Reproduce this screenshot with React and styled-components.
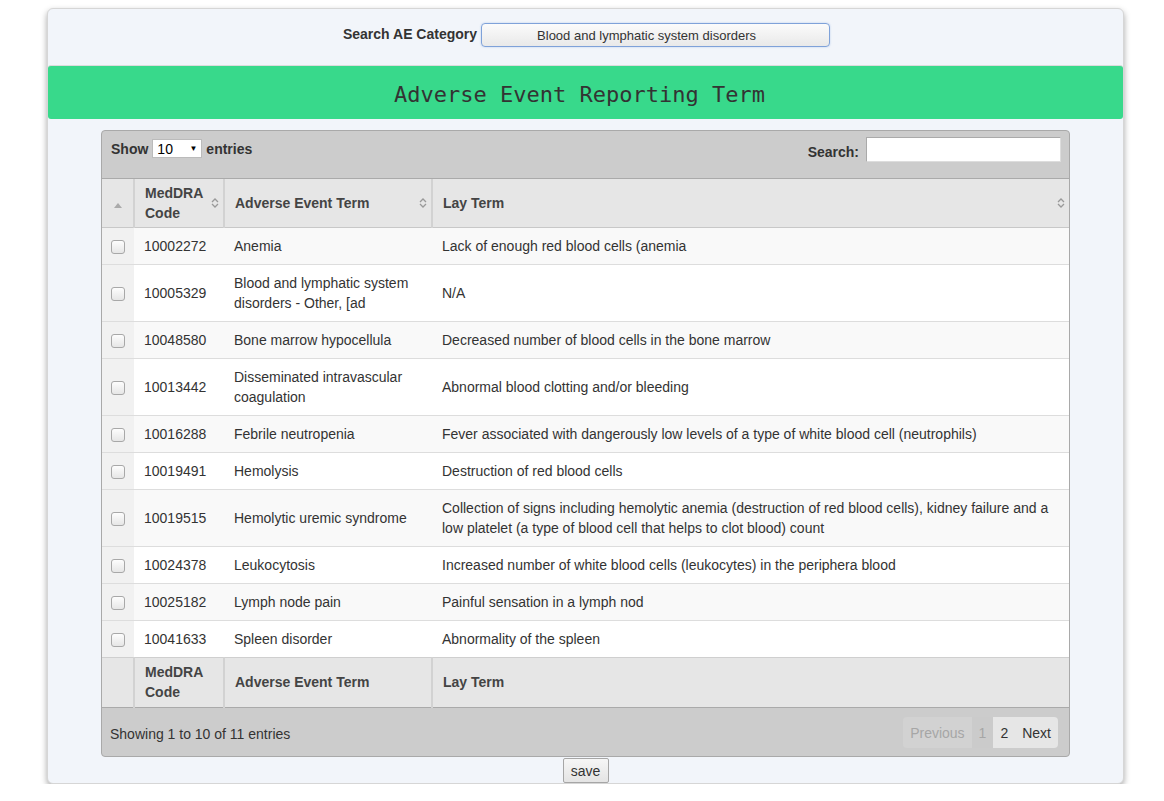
import React from 'react';
import styled, { createGlobalStyle } from 'styled-components';

const rows = [
  { code: '10002272', term: 'Anemia', lay: 'Lack of enough red blood cells (anemia' },
  { code: '10005329', term: 'Blood and lymphatic system disorders - Other, [ad', lay: 'N/A' },
  { code: '10048580', term: 'Bone marrow hypocellula', lay: 'Decreased number of blood cells in the bone marrow' },
  { code: '10013442', term: 'Disseminated intravascular coagulation', lay: 'Abnormal blood clotting and/or bleeding' },
  { code: '10016288', term: 'Febrile neutropenia', lay: 'Fever associated with dangerously low levels of a type of white blood cell (neutrophils)' },
  { code: '10019491', term: 'Hemolysis', lay: 'Destruction of red blood cells' },
  { code: '10019515', term: 'Hemolytic uremic syndrome', lay: 'Collection of signs including hemolytic anemia (destruction of red blood cells), kidney failure and a low platelet (a type of blood cell that helps to clot blood) count' },
  { code: '10024378', term: 'Leukocytosis', lay: 'Increased number of white blood cells (leukocytes) in the periphera blood' },
  { code: '10025182', term: 'Lymph node pain', lay: 'Painful sensation in a lymph nod' },
  { code: '10041633', term: 'Spleen disorder', lay: 'Abnormality of the spleen' },
];

function SortBoth() {
  return (
    <SortIcon width="8" height="12" viewBox="0 0 8 12">
      <path d="M1 5 L4 2 L7 5" fill="none" stroke="#999" strokeWidth="1.3" />
      <path d="M1 7 L4 10 L7 7" fill="none" stroke="#999" strokeWidth="1.3" />
    </SortIcon>
  );
}

function App() {
  return (
    <>
      <GlobalStyle />
      <Card>
        <CategoryRow>
          <CategoryLabel>Search AE Category</CategoryLabel>
          <CategoryButton>Blood and lymphatic system disorders</CategoryButton>
        </CategoryRow>
        <Banner>Adverse Event Reporting Term</Banner>
        <TableBox>
          <TopBar>
            <Length>
              Show
              <FakeSelect>
                10<span>▼</span>
              </FakeSelect>
              entries
            </Length>
            <SearchLabel>
              Search:
              <SearchInput />
            </SearchLabel>
          </TopBar>
          <Table>
            <colgroup>
              <col style={{ width: 32 }} />
              <col style={{ width: 90 }} />
              <col style={{ width: 208 }} />
              <col />
            </colgroup>
            <thead>
              <tr>
                <Th $center>
                  <svg width="8" height="5" viewBox="0 0 8 5">
                    <path d="M0 5 L4 0 L8 5 Z" fill="#aaa" />
                  </svg>
                </Th>
                <Th>
                  <HeadInner>
                    <span>MedDRA<br />Code</span>
                    <SortBoth />
                  </HeadInner>
                </Th>
                <Th>
                  <HeadInner>
                    <span>Adverse Event Term</span>
                    <SortBoth />
                  </HeadInner>
                </Th>
                <Th>
                  <HeadInner>
                    <span>Lay Term</span>
                    <SortBoth />
                  </HeadInner>
                </Th>
              </tr>
            </thead>
            <tbody>
              {rows.map((r, i) => (
                <Row key={r.code} $odd={i % 2 === 0}>
                  <CheckCell>
                    <Check />
                  </CheckCell>
                  <Td>{r.code}</Td>
                  <Td>{r.term}</Td>
                  <Td>{r.lay}</Td>
                </Row>
              ))}
            </tbody>
            <tfoot>
              <tr>
                <Tf />
                <Tf>MedDRA<br />Code</Tf>
                <Tf>Adverse Event Term</Tf>
                <Tf>Lay Term</Tf>
              </tr>
            </tfoot>
          </Table>
          <BottomBar>
            <span>Showing 1 to 10 of 11 entries</span>
            <Pager>
              <PageBtn $disabled $tone="#d2d2d2">Previous</PageBtn>
              <PageBtn $disabled $tone="#cbcbcb">1</PageBtn>
              <PageBtn $tone="#e6e6e6">2</PageBtn>
              <PageBtn $tone="#e6e6e6">Next</PageBtn>
            </Pager>
          </BottomBar>
        </TableBox>
        <SaveRow>
          <SaveButton>save</SaveButton>
        </SaveRow>
      </Card>
    </>
  );
}

export default App;

const GlobalStyle = createGlobalStyle`
  body {
    margin: 0;
    background: #fff;
    font-family: "Liberation Sans", Arial, sans-serif;
    font-size: 14px;
    color: #333;
  }
`;

const Card = styled.div`
  width: 1075px;
  margin: 8px 0 0 47px;
  background: #f2f5fa;
  border: 1px solid #d6d6d6;
  border-radius: 6px;
  box-shadow: 0 3px 6px rgba(0, 0, 0, 0.35);
`;

const CategoryRow = styled.div`
  display: flex;
  justify-content: center;
  align-items: center;
  gap: 4px;
  padding-top: 14px;
  margin-left: 2px;
`;

const CategoryLabel = styled.label`
  font-weight: bold;
  font-size: 14px;
  color: #333;
  margin-top: -3px;
`;

const CategoryButton = styled.div`
  width: 349px;
  height: 24px;
  box-sizing: border-box;
  border: 1px solid #7fa2d9;
  border-radius: 4px;
  background: linear-gradient(#fbfbfb, #e9e9e9);
  font-size: 13px;
  color: #333;
  display: flex;
  align-items: center;
  justify-content: center;
  padding-right: 18px;
  box-shadow: 0 0 2px rgba(90, 140, 220, 0.4);
`;

const Banner = styled.div`
  margin-top: 18px;
  height: 54px;
  box-sizing: border-box;
  padding: 3px 12px 0 0;
  border-top: 1px solid #dcdcdc;
  background: #38d98b;
  border-radius: 3px;
  display: flex;
  align-items: center;
  justify-content: center;
  font-family: "DejaVu Sans Mono", "Liberation Mono", monospace;
  font-size: 22px;
  color: #333;
`;

const TableBox = styled.div`
  width: 969px;
  box-sizing: border-box;
  margin: 11px 0 0 53px;
  background: #cccccc;
  border: 1px solid #a9a9a9;
  border-radius: 4px;
  overflow: hidden;
`;

const TopBar = styled.div`
  height: 47px;
  display: flex;
  justify-content: space-between;
  align-items: flex-start;
  padding: 0 8px 0 9px;
  border-bottom: 1px solid #aaa;
`;

const Length = styled.div`
  display: flex;
  align-items: center;
  gap: 4px;
  font-weight: bold;
  margin-top: 8px;
`;

const FakeSelect = styled.div`
  width: 50px;
  height: 19px;
  box-sizing: border-box;
  background: #fff;
  border: 1px solid #bbb;
  font-weight: normal;
  font-size: 14px;
  display: flex;
  align-items: center;
  justify-content: space-between;
  padding: 0 4px;
  color: #000;

  span {
    font-size: 8px;
  }
`;

const SearchLabel = styled.label`
  display: flex;
  align-items: center;
  gap: 7px;
  font-weight: bold;
  margin-top: 8px;
  padding-top: 2px;
`;

const SearchInput = styled.div`
  width: 195px;
  height: 25px;
  box-sizing: border-box;
  background: #fff;
  border: 1px solid #aaa;
  border-right-color: #ddd;
  border-bottom-color: #ddd;
  margin-top: -4px;
`;

const Table = styled.table`
  width: 100%;
  border-collapse: collapse;
  table-layout: fixed;
  background: #fff;
`;

const Th = styled.th`
  background: #e6e6e6;
  height: 48px;
  padding: 4px 10px;
  box-sizing: border-box;
  text-align: ${(p) => (p.$center ? 'center' : 'left')};
  font-weight: bold;
  line-height: 20px;
  color: #444;
  border-left: 2px solid #d2d2d2;
  border-bottom: 1px solid #c8c8c8;
  vertical-align: middle;

  &:first-child {
    border-left: none;
  }
`;

const HeadInner = styled.div`
  display: flex;
  align-items: center;
  justify-content: space-between;
`;

const SortIcon = styled.svg`
  flex-shrink: 0;
  margin-right: -6px;
`;

const Row = styled.tr`
  background: ${(p) => (p.$odd ? '#f9f9f9' : '#fff')};

  td {
    border-top: 1px solid #dddddd;
  }
  &:first-child td {
    border-top: none;
  }
`;

const Td = styled.td`
  padding: 8px 10px;
  line-height: 20px;
  vertical-align: middle;
  color: #333;
`;

const CheckCell = styled.td`
  background: #f1f1f1;
  text-align: center;
  vertical-align: middle;
  padding: 0;
`;

const Check = styled.span`
  display: inline-block;
  width: 12px;
  height: 12px;
  border: 1px solid #a8a8a8;
  border-radius: 3px;
  background: linear-gradient(#fdfdfd, #e6e6e6);
  vertical-align: middle;
`;

const Tf = styled.td`
  background: #e6e6e6;
  height: 50px;
  padding: 3px 10px 5px;
  box-sizing: border-box;
  font-weight: bold;
  line-height: 20px;
  color: #444;
  border-left: 2px solid #d2d2d2;
  border-top: 1px solid #cfcfcf;
  border-bottom: 1px solid #aaa;

  &:first-child {
    border-left: none;
  }
`;

const BottomBar = styled.div`
  height: 48px;
  display: flex;
  justify-content: space-between;
  align-items: center;
  padding: 0 11px 0 8px;
  color: #333;

  span {
    margin-top: 3px;
  }
`;

const Pager = styled.div`
  display: flex;
  height: 31px;
  border-radius: 4px;
  overflow: hidden;
  margin-top: 1px;
`;

const PageBtn = styled.div`
  display: flex;
  align-items: center;
  padding: 0 7px;
  background: ${(p) => p.$tone};
  color: ${(p) => (p.$disabled ? '#a6a6a6' : '#333')};
`;

const SaveRow = styled.div`
  display: flex;
  justify-content: center;
  padding-top: 1px;
`;

const SaveButton = styled.button`
  font-family: "Liberation Sans", Arial, sans-serif;
  font-size: 14px;
  color: #333;
  width: 46px;
  height: 25px;
  border: 1px solid #a6a6a6;
  border-radius: 2px;
  background: linear-gradient(#f6f6f6, #e4e4e4);
  padding: 0;
  display: block;
`;
